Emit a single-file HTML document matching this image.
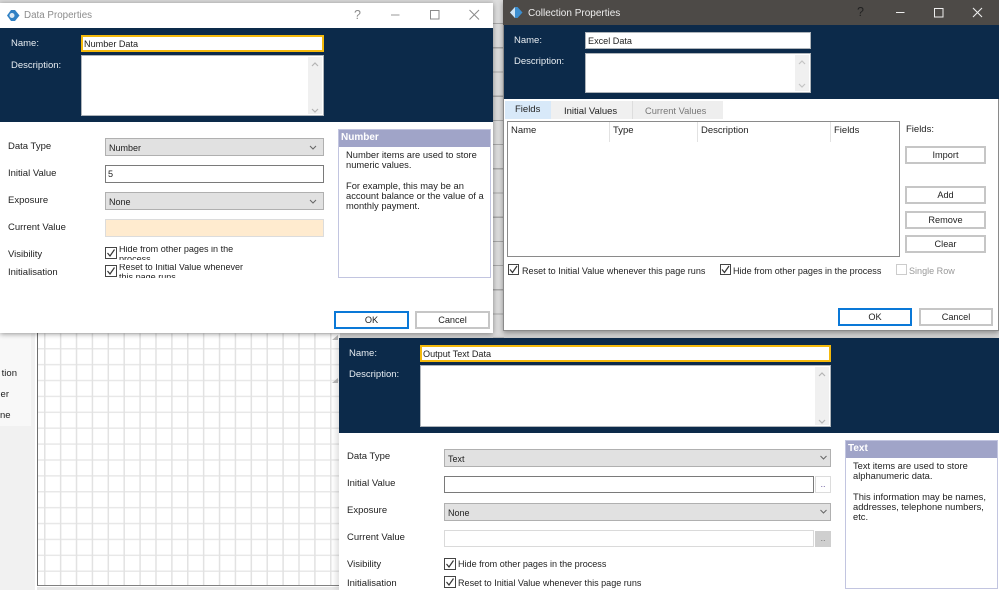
<!DOCTYPE html>
<html><head><meta charset="utf-8"><style>
html,body{margin:0;padding:0;width:999px;height:590px;overflow:hidden;background:#fff}
body{position:relative;font:9.5px/12px "Liberation Sans",sans-serif;color:#222;filter:blur(.3px)}
div,span,svg{position:absolute;box-sizing:border-box}
.t{white-space:nowrap;line-height:12px}
.w{color:#e8edf2}
.c{font-size:9.05px}
.inp{background:#fff;border:1px solid #7a7a7a;padding:1px 2px;line-height:15px;white-space:nowrap;font-size:9.1px}
.inn{border:1px solid #aeb4ba}
.yl{border:2px solid #f4b90c;background:#fff;padding:0 1px;line-height:14px;font-size:9.1px}
.sel{background:#e1e1e1;border:1.5px solid #b0b0b0;padding:2px 3px;line-height:14px;font-size:9px}
.sb{background:#f0f0f0;width:14px;top:1px;bottom:1px;right:1px}
.btn{background:#fff;border:2px solid #c6c6c6;text-align:center;line-height:15px;font-size:9.2px}
.ok{border:2px solid #0a78d7}
.cb{width:12px;height:12px;border:1.3px solid #444;background:#fff}
.pn{background:#fff;border:1px solid #c2c5e0;font-size:9.35px}
.ph{left:0;right:0;top:0;height:17px;background:#a0a4c8;color:#fff;font-weight:bold;line-height:16px;padding-left:2px;font-size:10px}
.clip{overflow:hidden}
</style></head><body>

<!-- background workspace -->
<div style="left:0;top:0;width:999px;height:340px;background:#d8d8d8"></div>
<div style="left:493px;top:0;width:11px;height:340px;background:repeating-linear-gradient(180deg,#dcdcdc 0,#dcdcdc 23px,#a9a9a9 23px,#a9a9a9 24.2px)"></div>
<div style="left:0;top:333px;width:340px;height:257px;background:#fff"></div>
<div style="left:0;top:333px;width:35px;height:257px;background:#f1f1f1"></div>
<div style="left:0;top:333px;width:31px;height:93px;background:#f8f8f8"></div>
<div class="t" style="left:0;top:368px;width:17px;text-align:right">tion</div>
<div class="t" style="left:0;top:389px;width:9px;text-align:right">er</div>
<div class="t" style="left:0;top:410px;width:9px;text-align:right">ne</div>
<div style="left:37px;top:333px;width:303px;height:253px;background-color:#fff;background-image:linear-gradient(90deg,#e2e2e2 1.5px,transparent 1.5px),linear-gradient(180deg,#e8e8e8 1.5px,transparent 1.5px);background-size:15.9px 15.9px;background-position:6px 15px;border-left:1.5px solid #6e6e6e;border-bottom:1.5px solid #808080"></div>
<div style="left:37px;top:587px;width:303px;height:3px;background:#e8e8e8"></div>
<svg style="left:331px;top:334px" width="8" height="50" viewBox="0 0 8 50"><path d="M1 6L7 1V6ZM1 49L7 44V49Z" fill="#b8b8b8"/></svg>

<!-- bottom dialog -->
<div style="left:339px;top:338px;width:660px;height:252px;background:#fff;box-shadow:-3px 0 5px rgba(0,0,0,.12)"></div>
<div style="left:339px;top:338px;width:660px;height:95px;background:#0c2a4a"></div>
<div class="t w" style="left:349px;top:348px">Name:</div>
<div class="t w" style="left:349px;top:369px">Description:</div>
<div class="yl" style="left:420px;top:345px;width:411px;height:17px">Output Text Data</div>
<div class="inn" style="left:420px;top:365px;width:411px;height:62px;background:#fff"><div class="sb"></div>
<svg style="right:3px;top:6px" width="10" height="52" viewBox="0 0 10 52"><path d="M2 4L5 1L8 4M2 48L5 51L8 48" fill="none" stroke="#b5b5b5" stroke-width="1.2"/></svg></div>
<div class="t" style="left:347px;top:451px">Data Type</div>
<div class="t" style="left:347px;top:478px">Initial Value</div>
<div class="t" style="left:347px;top:505px">Exposure</div>
<div class="t" style="left:347px;top:532px">Current Value</div>
<div class="t" style="left:347px;top:559px">Visibility</div>
<div class="t" style="left:347px;top:578px">Initialisation</div>
<div class="sel" style="left:444px;top:449px;width:387px;height:18px">Text</div>
<div class="inp" style="left:444px;top:476px;width:370px;height:17px"></div>
<div class="btn t" style="left:815px;top:476px;width:16px;height:17px;border-width:1.5px;border-color:#dcdcdc;line-height:15px;color:#7060a0">..</div>
<div class="sel" style="left:444px;top:503px;width:387px;height:18px">None</div>
<div class="inp" style="left:444px;top:530px;width:370px;height:17px;border-color:#dadada"></div>
<div class="btn t" style="left:815px;top:531px;width:16px;height:16px;border:0;background:#cfcfcf;line-height:15px;color:#777">..</div>
<div class="cb" style="left:444px;top:558px"></div><div class="t c" style="left:458px;top:558px">Hide from other pages in the process</div>
<div class="cb" style="left:444px;top:576px"></div><div class="t c" style="left:458px;top:577px">Reset to Initial Value whenever this page runs</div>
<svg style="left:444px;top:558px" width="12" height="30" viewBox="0 0 12 30"><path d="M2.5 6L5 9L9.500 2.500M2.500 24L5 27L9.500 20.500" fill="none" stroke="#333" stroke-width="1.2"/></svg>
<svg style="left:815px;top:450px" width="16" height="70" viewBox="0 0 16 70"><path d="M5.500 6L8.500 9L11.500 6M5.500 60L8.500 63L11.500 60" fill="none" stroke="#666" stroke-width="1"/></svg>
<div class="pn" style="left:845px;top:440px;width:153px;height:149px"><div class="ph">Text</div>
<div class="t" style="left:7px;top:20px;line-height:10.200px">Text items are used to store<br>alphanumeric data.<br><br>This information may be names,<br>addresses, telephone numbers,<br>etc.</div></div>

<!-- left dialog -->
<div style="left:0;top:3px;width:493px;height:330px;background:#fff;box-shadow:0 1px 5px rgba(0,0,0,.4)"></div>
<div style="left:0;top:28px;width:493px;height:94px;background:#0c2a4a"></div>
<svg style="left:7px;top:9px" width="13" height="13" viewBox="0 0 13 13"><path d="M0 6.500L4 1H8L12.500 6.500L8 12H4Z" fill="#2f80c4"/><circle cx="5" cy="6.500" r="2.500" fill="#dbe9f5"/></svg>
<div class="t" style="left:24px;top:10px;font-size:9.800px;color:#8c8c8c">Data Properties</div>
<div class="t" style="left:354px;top:9px;font-size:12.500px;color:#8c8c8c">?</div>
<svg style="left:390px;top:7px" width="95" height="16" viewBox="0 0 95 16"><path d="M1 8H9.500" stroke="#9a9a9a" stroke-width="1"/><rect x="40.500" y="3.500" width="8.500" height="8.500" fill="none" stroke="#8a8a8a"/><path d="M79.500 3L89 12.500M89 3L79.500 12.500" stroke="#8a8a8a" stroke-width="1"/></svg>
<div class="t w" style="left:11px;top:38px">Name:</div>
<div class="t w" style="left:11px;top:60px">Description:</div>
<div class="yl" style="left:81px;top:35px;width:243px;height:17px">Number Data</div>
<div class="inn" style="left:81px;top:55px;width:243px;height:61px;background:#fff"><div class="sb"></div>
<svg style="right:3px;top:6px" width="10" height="51" viewBox="0 0 10 51"><path d="M2 4L5 1L8 4M2 47L5 50L8 47" fill="none" stroke="#b5b5b5" stroke-width="1.200"/></svg></div>
<div class="t" style="left:8px;top:141px">Data Type</div>
<div class="t" style="left:8px;top:168px">Initial Value</div>
<div class="t" style="left:8px;top:195px">Exposure</div>
<div class="t" style="left:8px;top:222px">Current Value</div>
<div class="t" style="left:8px;top:249px">Visibility</div>
<div class="t" style="left:8px;top:267px">Initialisation</div>
<div class="sel" style="left:105px;top:138px;width:219px;height:18px">Number</div>
<div class="inp" style="left:105px;top:165px;width:219px;height:18px">5</div>
<div class="sel" style="left:105px;top:192px;width:219px;height:18px">None</div>
<svg style="left:305px;top:140px" width="16" height="70" viewBox="0 0 16 70"><path d="M5 6L8 9L11 6M5 60L8 63L11 60" fill="none" stroke="#666" stroke-width="1"/></svg>
<div class="inp" style="left:105px;top:219px;width:219px;height:18px;background:#ffebcf;border-color:#dcdcdc"></div>
<div class="cb" style="left:105px;top:247px"></div>
<div class="cb" style="left:105px;top:265px"></div>
<svg style="left:105px;top:247px" width="12" height="30" viewBox="0 0 12 30"><path d="M2.500 6L5 9L9.500 2.500M2.500 24L5 27L9.500 20.500" fill="none" stroke="#333" stroke-width="1.200"/></svg>
<div class="clip c" style="left:119px;top:246px;width:130px;height:14px"><div class="t" style="left:0;top:-2.500px;line-height:10.300px">Hide from other pages in the<br>process</div></div>
<div class="clip c" style="left:119px;top:264px;width:130px;height:14px"><div class="t" style="left:0;top:-2px;line-height:10.300px">Reset to Initial Value whenever<br>this page runs</div></div>
<div class="pn" style="left:338px;top:129px;width:153px;height:149px"><div class="ph">Number</div>
<div class="t" style="left:7px;top:20px;line-height:10.200px">Number items are used to store<br>numeric values.<br><br>For example, this may be an<br>account balance or the value of a<br>monthly payment.</div></div>
<div class="btn ok t" style="left:334px;top:311px;width:75px;height:18px">OK</div>
<div class="btn t" style="left:415px;top:311px;width:75px;height:18px">Cancel</div>

<!-- right dialog -->
<div style="left:503px;top:0;width:496px;height:331px;background:#fff;border:1px solid #8a8a8a;border-top:0;box-shadow:0 2px 5px rgba(0,0,0,.35)"></div>
<div style="left:503px;top:0;width:496px;height:25px;background:#4d4a47"></div>
<div style="left:504px;top:25px;width:495px;height:74px;background:#0c2a4a"></div>
<svg style="left:510px;top:6px" width="13" height="13" viewBox="0 0 13 13"><path d="M0 6.500L5 1H7.500L12.500 6.500L7.500 12H5Z" fill="#3d8fd0"/><path d="M0 6.500L5 1V12Z" fill="#cfe3f3"/></svg>
<div class="t" style="left:528px;top:8px;font-size:10px;color:#eee">Collection Properties</div>
<div class="t" style="left:857px;top:6px;font-size:12.500px;color:#222">?</div>
<svg style="left:895px;top:4px" width="95" height="16" viewBox="0 0 95 16"><path d="M1 8.500H9.500" stroke="#eee" stroke-width="1"/><rect x="39.500" y="4.500" width="8.500" height="8.500" fill="none" stroke="#eee"/><path d="M78 4L87 13M87 4L78 13" stroke="#eee" stroke-width="1.100"/></svg>
<div class="t w" style="left:514px;top:35px">Name:</div>
<div class="t w" style="left:514px;top:56px">Description:</div>
<div class="inp" style="left:585px;top:32px;width:226px;height:17px;border-color:#aeb4ba;line-height:14px">Excel Data</div>
<div class="inn" style="left:585px;top:53px;width:226px;height:40px;background:#fff"><div class="sb"></div>
<svg style="right:3px;top:6px" width="10" height="28" viewBox="0 0 10 28"><path d="M2 4L5 1L8 4M2 24L5 27L8 24" fill="none" stroke="#c4c4c4" stroke-width="1.200"/></svg></div>
<div style="left:505px;top:101px;width:46px;height:18px;background:#d8e9f9"></div>
<div style="left:551px;top:101px;width:81px;height:18px;background:#f0f0f0"></div>
<div style="left:632px;top:101px;width:91px;height:18px;background:#eeeeee;border-left:1px solid #ddd"></div>
<div class="t" style="left:515px;top:104px">Fields</div>
<div class="t" style="left:564px;top:106px">Initial Values</div>
<div class="t" style="left:645px;top:105px;color:#777;font-size:9.300px">Current Values</div>
<div style="left:507px;top:121px;width:393px;height:136px;background:#fff;border:1.500px solid #8a8a8a"></div>
<div class="t" style="left:511px;top:125px">Name</div>
<div class="t" style="left:613px;top:125px">Type</div>
<div class="t" style="left:701px;top:125px">Description</div>
<div class="t" style="left:834px;top:125px">Fields</div>
<div style="left:609px;top:122px;width:1px;height:20px;background:#e2e2e2"></div>
<div style="left:697px;top:122px;width:1px;height:20px;background:#e2e2e2"></div>
<div style="left:830px;top:122px;width:1px;height:20px;background:#e2e2e2"></div>
<div class="t" style="left:906px;top:124px">Fields:</div>
<div class="btn t" style="left:905px;top:146px;width:81px;height:18px">Import</div>
<div class="btn t" style="left:905px;top:186px;width:81px;height:18px">Add</div>
<div class="btn t" style="left:905px;top:211px;width:81px;height:18px">Remove</div>
<div class="btn t" style="left:905px;top:235px;width:81px;height:18px">Clear</div>
<div class="cb" style="left:508px;top:264px;width:11px;height:11px"></div>
<div class="t c" style="left:522px;top:265px">Reset to Initial Value whenever this page runs</div>
<div class="cb" style="left:720px;top:264px;width:11px;height:11px"></div>
<div class="t c" style="left:733px;top:265px">Hide from other pages in the process</div>
<svg style="left:508px;top:264px" width="224" height="11" viewBox="0 0 224 11"><path d="M2 5.500L4.500 8.500L9 2M214 5.500L216.500 8.500L221 2" fill="none" stroke="#333" stroke-width="1.200"/></svg>
<div class="cb" style="left:896px;top:264px;width:11px;height:11px;border-color:#ccc"></div>
<div class="t c" style="left:909px;top:265px;color:#999">Single Row</div>
<div class="btn ok t" style="left:838px;top:308px;width:74px;height:18px">OK</div>
<div class="btn t" style="left:919px;top:308px;width:74px;height:18px">Cancel</div>
</body></html>
